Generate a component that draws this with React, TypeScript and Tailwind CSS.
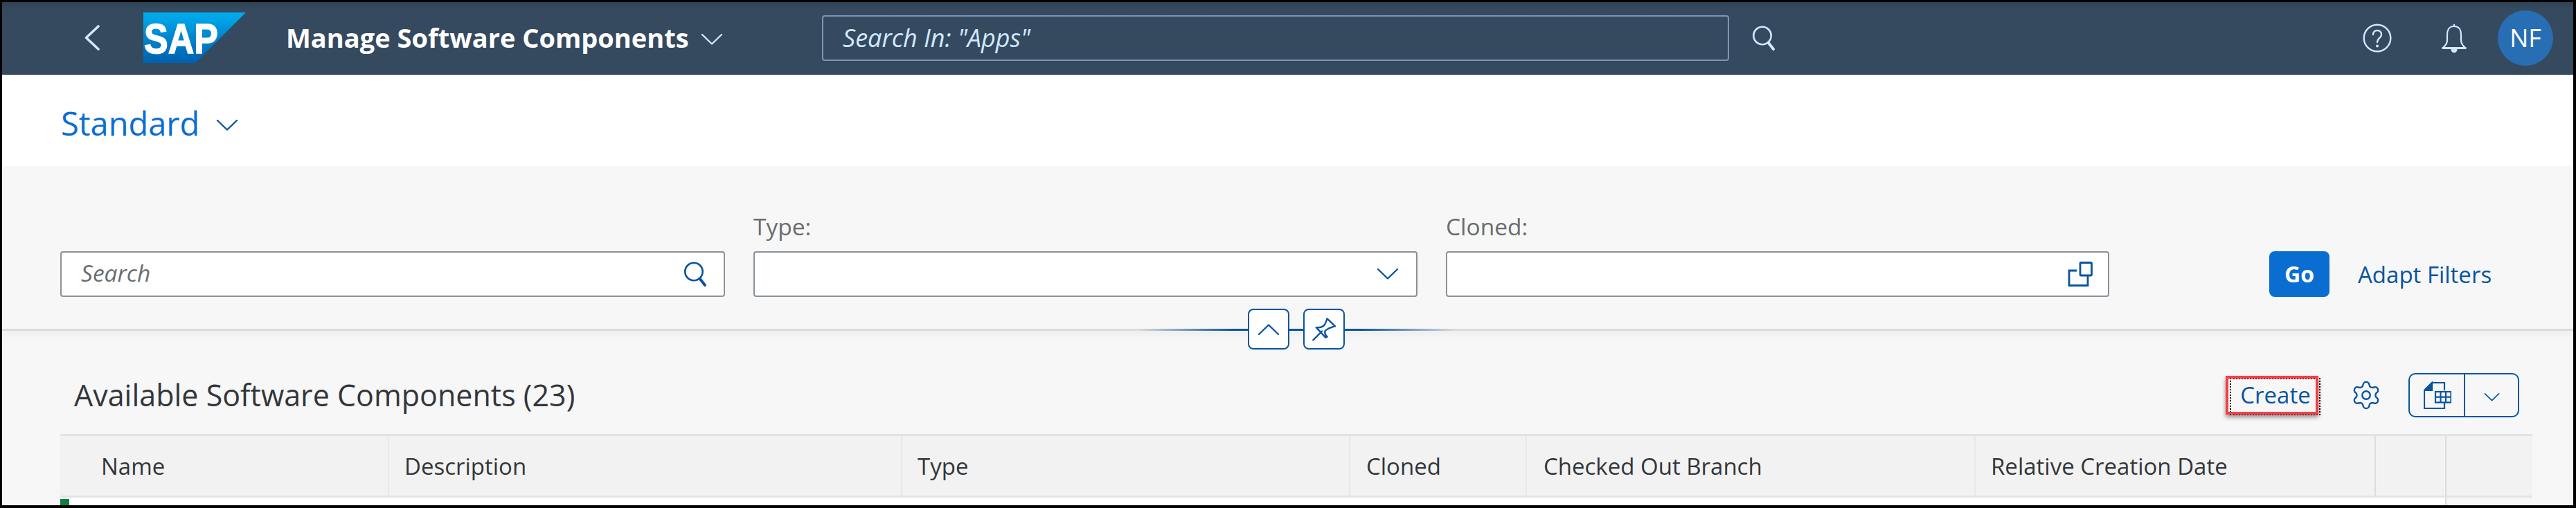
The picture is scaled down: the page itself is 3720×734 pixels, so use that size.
import React from "react";
import { Settings } from "lucide-react";

const F = { fontFamily: '"Open Sans", "Noto Sans", sans-serif' };

const Chevron = ({ className, up = false }: { className: string; up?: boolean }) => (
  <svg viewBox="0 0 32 16" fill="none" stroke="currentColor" strokeWidth="2.4" strokeLinecap="round" strokeLinejoin="round" className={className}>
    <path d={up ? "M2 15 L16 1.5 L30 15" : "M2 1 L16 14.5 L30 1"} />
  </svg>
);

const SearchIcon = ({ className }: { className: string }) => (
  <svg viewBox="0 0 36 36" fill="none" stroke="currentColor" strokeLinecap="round" className={className}>
    <circle cx="15" cy="14.5" r="12.7" strokeWidth="2.6" />
    <path d="M23.5 24.5 L31 34" strokeWidth="4" />
  </svg>
);

const SapLogo = () => (
  <svg viewBox="0 0 148 73" className="w-[148px] h-[73px] shrink-0">
    <defs>
      <linearGradient id="sapg" x1="0" y1="0" x2="0" y2="1">
        <stop offset="0" stopColor="#00aeef" />
        <stop offset="0.45" stopColor="#0089d2" />
        <stop offset="1" stopColor="#0060ae" />
      </linearGradient>
    </defs>
    <polygon points="0,0 148,0 75,73 0,73" fill="url(#sapg)" />
    <text x="1" y="59" fill="#fff" fontFamily="Liberation Sans" fontWeight="700" fontSize="62" textLength="107" lengthAdjust="spacingAndGlyphs" stroke="#fff" strokeWidth="1.5">SAP</text>
  </svg>
);

const HelpIcon = () => (
  <svg viewBox="0 0 42 42" fill="none" stroke="#d1e8ff" className="w-[42px] h-[42px]">
    <circle cx="21" cy="21" r="19.3" strokeWidth="2.4" />
    <path d="M15 16 C15 8 27 8 27 16 C27 21 21 21 21 27" strokeWidth="2.4" strokeLinecap="round" />
    <circle cx="21" cy="32.5" r="2" fill="#d1e8ff" stroke="none" />
  </svg>
);

const BellIcon = () => (
  <svg viewBox="0 0 38 42" fill="none" stroke="#d1e8ff" strokeWidth="2.2" strokeLinejoin="round" className="w-[38px] h-[42px]">
    <path d="M19 1 L19 4 M19 4 C11 4 9 10 9 16 L9 24 C9 30 6 32 3 35 L35 35 C32 32 29 30 29 24 L29 16 C29 10 27 4 19 4 Z" />
    <path d="M1.5 35.5 L36.5 35.5" strokeWidth="3" />
    <path d="M15.5 37 C16 42.5 22 42.5 22.5 37 Z" fill="#d1e8ff" />
  </svg>
);

const ValueHelpIcon = () => (
  <svg viewBox="0 0 36 36" fill="none" stroke="#0854a0" strokeWidth="2.8" className="w-[36px] h-[36px]">
    <path d="M13 13 L2 13 L2 34.5 L29 34.5 L29 20" />
    <rect x="18" y="1.5" width="16.5" height="18.5" rx="1" />
  </svg>
);

const PinIcon = () => (
  <svg viewBox="736 116 101 101" fill="none" stroke="#0854a0" strokeWidth="7" strokeLinecap="round" strokeLinejoin="round" className="w-[34px] h-[34px]">
    <path d="M740 212 L778 174" />
    <path d="M800 120 L834 153 Q806 160 792 172 Q786 185 800 198 L793 201 L753 158 Q780 160 790 145 Q795 135 800 120 Z" />
  </svg>
);

const ExcelIcon = () => (
  <svg viewBox="0 0 40 40" fill="none" stroke="#0854a0" strokeWidth="2.2" className="w-[40px] h-[40px]">
    <path d="M30 13 L30 2 L12 2 L1 13 L1 39 L30 39 L30 31" />
    <path d="M1 13 L12 13 L12 2 Z" fill="#0854a0" />
    <rect x="17" y="15" width="22.5" height="15.5" />
    <path d="M24.5 15 L24.5 30.5 M32 15 L32 30.5 M17 22.7 L39.5 22.7" />
  </svg>
);

const columns = [
  { w: "w-[475px]", pl: "pl-[59px]", label: "Name" },
  { w: "w-[741px]", pl: "pl-[22px]", label: "Description" },
  { w: "w-[647px]", pl: "pl-[22px]", label: "Type" },
  { w: "w-[255px]", pl: "pl-[23px]", label: "Cloned" },
  { w: "w-[648px]", pl: "pl-[24px]", label: "Checked Out Branch" },
  { w: "w-[578px]", pl: "pl-[22px]", label: "Relative Creation Date" },
  { w: "w-[102px]", pl: "pl-0", label: "" },
];

export default function App() {
  return (
    <div style={F} className="w-[3720px] h-[734px] flex flex-col overflow-hidden bg-[#f7f7f7] border-t-[3px] border-l-[3px] border-r-[4px] border-b-[4px] border-black">
      {/* Shell bar */}
      <header className="h-[105px] shrink-0 flex items-center bg-[linear-gradient(#2f4153_0,#354a5f_10px)] pl-[119px] pr-[29px]">
        <svg viewBox="0 0 22 37" fill="none" stroke="#d1e8ff" strokeWidth="3.6" strokeLinecap="round" strokeLinejoin="round" className="w-[22px] h-[37px] shrink-0 -mt-[2px]">
          <path d="M20 2 L2.5 18.5 L20 35" />
        </svg>
        <div className="ml-[63px] -mt-[2px] flex"><SapLogo /></div>
        <h1 className="ml-[58px] w-[579px] text-[38px] leading-none font-bold text-white -mt-[4px] whitespace-nowrap">Manage Software Components</h1>
        <Chevron className="ml-[20px] w-[32px] h-[16px] text-[#d1e8ff] shrink-0 mt-[2px]" />
        <div className="ml-[143px] w-[1310px] h-[66px] -mt-[2px] shrink-0 flex items-center border-2 border-[#7996b4] rounded-[4px] pl-[28px]">
          <span className="text-[36px] italic text-[#d1e8ff] leading-none">Search In: "Apps"</span>
        </div>
        <SearchIcon className="ml-[33px] w-[36px] h-[36px] text-[#d1e8ff] shrink-0 -mt-[2px]" />
        <div className="ml-auto flex items-center -mt-[2px]">
          <HelpIcon />
          <div className="ml-[71px]"><BellIcon /></div>
          <div className="ml-[44px] w-[80px] h-[80px] rounded-full bg-[#286eb4] flex items-center justify-center text-[36px] text-white leading-none">NF</div>
        </div>
      </header>

      {/* Variant row */}
      <div className="h-[132px] shrink-0 bg-white flex items-center pl-[85px] pt-[8px]">
        <span className="text-[47px] leading-none text-[#0a6ed1]">Standard</span>
        <Chevron className="ml-[24px] w-[32px] h-[16px] text-[#0854a0] mt-[5px]" />
      </div>

      {/* Filter bar */}
      <section className="relative h-[238px] shrink-0 border-b-[3px] border-[#dcdcdc] pl-[84px] pt-[71px] shadow-[0_6px_10px_rgba(0,0,0,0.04)]">
        <div className="flex items-end">
          <div className="w-[960px] h-[66px] bg-white border-2 border-[#89919a] rounded-[4px] flex items-center justify-between pl-[28px] pr-[22px]">
            <span className="text-[33.5px] italic text-[#6a6d70] leading-none -mt-[3px]">Search</span>
            <SearchIcon className="w-[36px] h-[36px] text-[#0854a0]" />
          </div>
          <div className="ml-[41px] w-[959px]">
            <label className="block text-[33.5px] leading-[32px] text-[#6a6d70] mb-[20px]">Type:</label>
            <div className="h-[66px] bg-white border-2 border-[#89919a] rounded-[4px] flex items-center justify-end pr-[25px]">
              <Chevron className="w-[32px] h-[16px] text-[#0854a0]" />
            </div>
          </div>
          <div className="ml-[41px] w-[958px]">
            <label className="block text-[33.5px] leading-[32px] text-[#6a6d70] mb-[20px]">Cloned:</label>
            <div className="h-[66px] bg-white border-2 border-[#89919a] rounded-[4px] flex items-center justify-end pr-[22px]">
              <ValueHelpIcon />
            </div>
          </div>
          <button className="ml-[231px] w-[87px] h-[66px] rounded-[8px] bg-[#0a6ed1] text-white text-[32px] font-bold leading-none">Go</button>
          <span className="ml-[41px] h-[66px] flex items-center text-[33px] text-[#0854a0] leading-none whitespace-nowrap -mt-[2px]">Adapt Filters</span>
        </div>
        {/* Collapse handle, lying over the divider */}
        <div className="absolute left-[1640px] -bottom-[3px] w-[460px] h-[3px] bg-[linear-gradient(90deg,transparent,#0854a0_30%,#0854a0_70%,transparent)]" />
        <div className="absolute left-[1799px] top-[206px] flex gap-[20px]">
          <div className="w-[60px] h-[59px] bg-white border-2 border-[#0854a0] rounded-[8px] flex items-center justify-center">
            <Chevron up className="w-[32px] h-[16px] text-[#0854a0]" />
          </div>
          <div className="w-[60px] h-[59px] bg-white border-2 border-[#0854a0] rounded-[8px] flex items-center justify-center">
            <PinIcon />
          </div>
        </div>
      </section>

      {/* Table toolbar */}
      <div className="h-[149px] shrink-0 flex items-center pl-[104px] pr-[78px] pt-[36px]">
        <h2 className="text-[43px] leading-none text-[#32363a] whitespace-nowrap -mt-[1px]">Available Software Components (23)</h2>
        <div className="ml-auto flex items-center">
          <div className="relative w-[134px] h-[56px] flex items-center justify-center text-[33px] leading-none text-[#0854a0] pl-[10px] pb-[1px] shadow-[0_4px_6px_rgba(0,0,0,0.4)]">
            <span className="absolute left-[6px] top-[3px] -right-[3px] -bottom-[1px] border-2 border-dotted border-black pointer-events-none" />
            <span className="absolute inset-0 border-[4px] border-[#f43f46] pointer-events-none" />
            Create
          </div>
          <Settings className="ml-[46px] w-[46px] h-[46px] text-[#0854a0]" strokeWidth={1.25} />
          <div className="ml-[38px] w-[160px] h-[64px] flex border-2 border-[#0854a0] rounded-[10px]">
            <div className="w-[80px] flex items-center justify-center border-r-2 border-[#0854a0] pl-[2px]"><ExcelIcon /></div>
            <div className="flex-1 flex items-center justify-center pt-[6px]">
              <Chevron className="w-[23px] h-[12px] text-[#0854a0]" />
            </div>
          </div>
        </div>
      </div>

      {/* Table */}
      <div className="ml-[84px] w-[3570px] h-[92px] shrink-0 flex bg-[#f2f2f2] border-t-[3px] border-b-[3px] border-[#e3e3e3]">
        {columns.map((c, i) => (
          <div key={i} className={`${c.w} ${c.pl} shrink-0 flex items-center text-[33px] leading-none text-[#32363a] whitespace-nowrap ${i < 5 ? "border-r-2 border-[#e8e8e8]" : "border-r-2 border-[#dcdcdc]"}`}>{c.label}</div>
        ))}
      </div>
      <div className="ml-[84px] w-[3446px] flex-1 bg-white border-r-2 border-[#dcdcdc] pt-[2px]">
        <div className="w-[13px] h-full bg-[#107e3e]" />
      </div>
    </div>
  );
}
